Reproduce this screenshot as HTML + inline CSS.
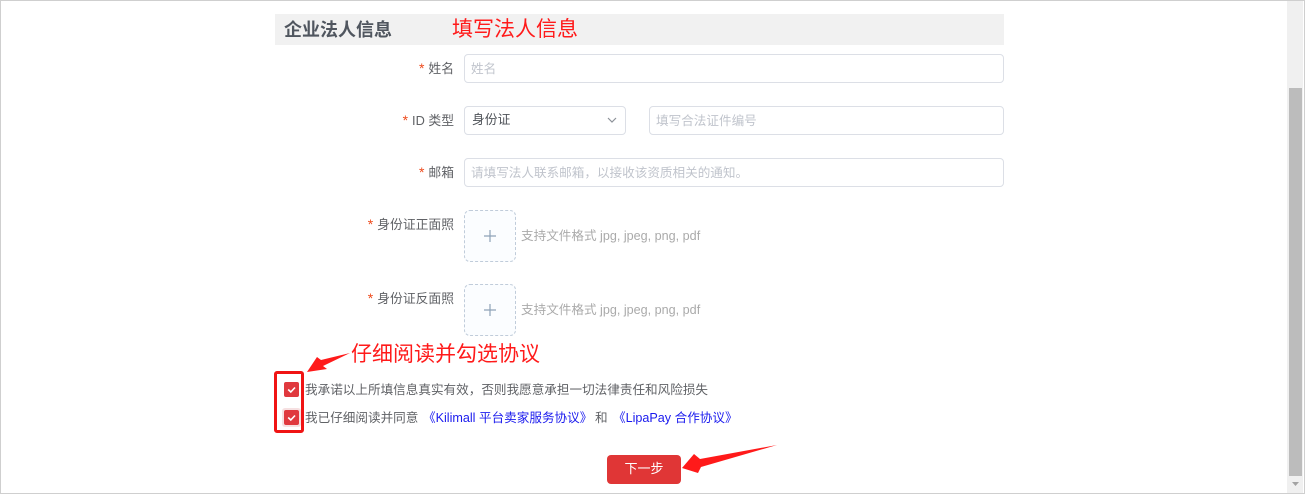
<!DOCTYPE html>
<html><head><meta charset="utf-8">
<style>
html,body{margin:0;padding:0;background:#fff;}
body{width:1307px;height:496px;position:relative;overflow:hidden;font-family:"Liberation Sans","Noto Sans CJK SC",sans-serif;font-size:13px;color:#606266;}
.a{position:absolute;white-space:nowrap;}
.frame{position:absolute;left:0;top:0;width:1303px;height:492px;border:1px solid #cfcfcf;}
.input{position:absolute;height:27px;border:1px solid #dcdfe6;border-radius:4px;background:#fff;box-sizing:content-box;}
.ph{position:absolute;color:#c0c4cc;font-size:12.600px;line-height:16px;white-space:nowrap;}
.lab{position:absolute;text-align:right;right:853px;font-size:12.800px;line-height:16px;color:#606266;white-space:nowrap;}
.lab i{font-style:normal;color:#ee4a1c;margin-right:4px;font-size:14px;line-height:0;}
.up{position:absolute;left:464px;width:50px;height:50px;border:1px dashed #c0ccda;border-radius:6px;background:#fbfdff;}
.hint{position:absolute;left:521px;color:#aaa;font-size:12.600px;line-height:16px;white-space:nowrap;}
.cb{position:absolute;left:284px;width:15px;height:15px;background:#e0393e;border-radius:2px;}
.red{position:absolute;color:#ff1a1a;white-space:nowrap;font-size:21px;line-height:26px;}
.t{position:absolute;white-space:nowrap;line-height:16px;font-size:12.600px;}
a{color:#1a1aee;text-decoration:none;}
</style></head>
<body>
<div class="frame"></div>

<div class="a" style="left:1287px;top:1px;width:16px;height:492px;background:#f0f0f0"></div>
<div class="a" style="left:1289px;top:88px;width:13px;height:388px;background:#bcbcbc"></div>
<svg class="a" style="left:1291px;top:481px" width="10" height="6"><path d="M1 1H8L4.500 5Z" fill="#a3a3a3"/></svg>

<div class="a" style="left:275px;top:14px;width:729px;height:31px;background:#f1f1f1"></div>
<div class="a" style="left:284px;top:19px;font-size:18px;line-height:22px;font-weight:bold;color:#50565f">企业法人信息</div>
<div class="red" style="left:452px;top:17px">填写法人信息</div>

<div class="lab" style="top:61px"><i>*</i>姓名</div>
<div class="input" style="left:464px;top:54px;width:538px"></div>
<div class="ph" style="left:471px;top:61px">姓名</div>

<div class="lab" style="top:113px"><i>*</i>ID 类型</div>
<div class="input" style="left:464px;top:106px;width:160px"></div>
<div class="a" style="left:472px;top:112px;line-height:16px;font-size:12.800px;color:#4f5359">身份证</div>
<svg class="a" style="left:606px;top:116px" width="12" height="8"><path d="M2 2L6 6L10 2" fill="none" stroke="#8c9198" stroke-width="1.200"/></svg>
<div class="input" style="left:649px;top:106px;width:353px"></div>
<div class="ph" style="left:656px;top:113px">填写合法证件编号</div>

<div class="lab" style="top:165px"><i>*</i>邮箱</div>
<div class="input" style="left:464px;top:158px;width:538px"></div>
<div class="ph" style="left:471px;top:165px">请填写法人联系邮箱，以接收该资质相关的通知。</div>

<div class="lab" style="top:217px"><i>*</i>身份证正面照</div>
<div class="up" style="top:210px"></div>
<svg class="a" style="left:483px;top:229px" width="14" height="14"><path d="M7 1V13M1 7H13" stroke="#8ea3b8" stroke-width="1.200" fill="none"/></svg>
<div class="hint" style="top:228px">支持文件格式 jpg, jpeg, png, pdf</div>

<div class="lab" style="top:291px"><i>*</i>身份证反面照</div>
<div class="up" style="top:284px"></div>
<svg class="a" style="left:483px;top:303px" width="14" height="14"><path d="M7 1V13M1 7H13" stroke="#8ea3b8" stroke-width="1.200" fill="none"/></svg>
<div class="hint" style="top:302px">支持文件格式 jpg, jpeg, png, pdf</div>

<div class="red" style="left:351px;top:342px">仔细阅读并勾选协议</div>
<svg class="a" style="left:300px;top:345px" width="60" height="32"><path d="M50 8L21 15L17 12L7 27L27 24L23 21Z" fill="#ff1a1a"/></svg>
<div class="a" style="left:274px;top:371px;width:24px;height:56px;border:3px solid #f01414;border-radius:3px"></div>

<div class="cb" style="top:382px"></div>
<svg class="a" style="left:284px;top:382px" width="15" height="15"><path d="M4.200 7.500L6.800 10L11 5.500" fill="none" stroke="#fff" stroke-width="1.600"/></svg>
<div class="t" style="left:305px;top:382px">我承诺以上所填信息真实有效，否则我愿意承担一切法律责任和风险损失</div>

<div class="a" style="left:282px;top:408px;width:19px;height:19px;background:#f6e0e1;border-radius:3px"></div>
<div class="cb" style="top:410px"></div>
<svg class="a" style="left:284px;top:410px" width="15" height="15"><path d="M4.200 7.500L6.800 10L11 5.500" fill="none" stroke="#fff" stroke-width="1.600"/></svg>
<div class="t" style="left:305px;top:410px">我已仔细阅读并同意</div>
<div class="t" style="left:423px;top:410px"><a>《Kilimall 平台卖家服务协议》</a></div>
<div class="t" style="left:595px;top:410px">和</div>
<div class="t" style="left:613px;top:410px"><a>《LipaPay 合作协议》</a></div>

<div class="a" style="left:607px;top:455px;width:74px;height:29px;background:#e03636;border-radius:4px;color:#fff;text-align:center;line-height:27px;font-size:13px">下一步</div>
<svg class="a" style="left:678px;top:440px" width="104" height="36"><path d="M99 5L22 19L16 14L4 28L20 33L23 27Z" fill="#ff1a1a"/></svg>
</body></html>
